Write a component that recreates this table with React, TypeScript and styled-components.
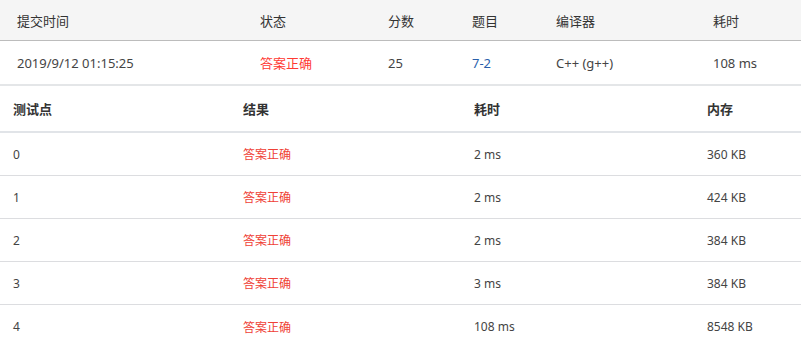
import styled, { createGlobalStyle } from 'styled-components';

const GlobalStyle = createGlobalStyle`
  html, body {
    margin: 0;
    padding: 0;
    background: #fff;
  }
  body {
    font-family: "Noto Sans", "Noto Sans CJK SC", sans-serif;
    font-size: 13px;
    color: #333;
  }
`;

const summaryCols = [17, 260, 388, 472, 556, 713];
const caseCols = [13, 243, 474, 707];

const cases = [
  { id: '0', time: '2 ms', mem: '360 KB' },
  { id: '1', time: '2 ms', mem: '424 KB' },
  { id: '2', time: '2 ms', mem: '384 KB' },
  { id: '3', time: '3 ms', mem: '384 KB' },
  { id: '4', time: '108 ms', mem: '8548 KB' },
];

function toTemplate(cols: number[]) {
  const widths = cols.map((x, i) => (i < cols.length - 1 ? `${cols[i + 1] - x}px` : '1fr'));
  return widths.join(' ');
}

export default function App() {
  return (
    <Page>
      <GlobalStyle />
      <SummaryHead $cols={toTemplate(summaryCols)} $pad={summaryCols[0]}>
        <span>提交时间</span>
        <span>状态</span>
        <span>分数</span>
        <span>题目</span>
        <span>编译器</span>
        <span>耗时</span>
      </SummaryHead>
      <SummaryRow $cols={toTemplate(summaryCols)} $pad={summaryCols[0]}>
        <span>2019/9/12 01:15:25</span>
        <Accepted>答案正确</Accepted>
        <span>25</span>
        <ProblemLink href="#">7-2</ProblemLink>
        <span>C++ (g++)</span>
        <span>108 ms</span>
      </SummaryRow>
      <CaseHead $cols={toTemplate(caseCols)} $pad={caseCols[0]}>
        <span>测试点</span>
        <span>结果</span>
        <span>耗时</span>
        <span>内存</span>
      </CaseHead>
      {cases.map((c) => (
        <CaseRow key={c.id} $cols={toTemplate(caseCols)} $pad={caseCols[0]}>
          <span>{c.id}</span>
          <Accepted $small>答案正确</Accepted>
          <span>{c.time}</span>
          <span>{c.mem}</span>
        </CaseRow>
      ))}
    </Page>
  );
}

const Page = styled.div`
  width: 801px;
  display: flex;
  flex-direction: column;
`;

const Row = styled.div<{ $cols: string; $pad: number }>`
  display: grid;
  grid-template-columns: ${(p) => p.$cols};
  align-items: center;
  padding-left: ${(p) => p.$pad}px;
  box-sizing: border-box;
  white-space: nowrap;
`;

const SummaryHead = styled(Row)`
  height: 41px;
  background: #f5f5f5;
  border-bottom: 1px solid #bcbcbc;
  color: #333;
`;

const SummaryRow = styled(Row)`
  height: 45px;
  border-bottom: 2px solid #e4e6e8;
  color: #444;
`;

const CaseHead = styled(Row)`
  height: 47px;
  border-bottom: 2px solid #e1e4e8;
  font-weight: 700;
  color: #333;
`;

const CaseRow = styled(Row)`
  height: 43px;
  border-bottom: 1px solid #dcdde0;
  font-size: 12px;
  color: #444;

  &:last-child {
    border-bottom: none;
  }
`;

const Accepted = styled.span<{ $small?: boolean }>`
  color: ${(p) => (p.$small ? '#ef4136' : '#ff3a33')};
`;

const ProblemLink = styled.a`
  color: #2a5fab;
  text-decoration: none;
`;
